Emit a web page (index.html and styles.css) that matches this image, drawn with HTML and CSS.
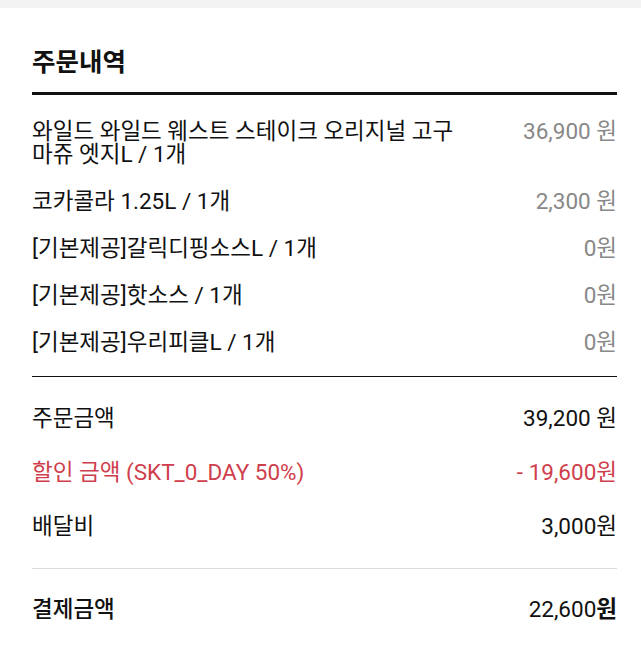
FILE: index.html
```html
<!DOCTYPE html>
<html lang="ko">
<head>
<meta charset="utf-8">
<link rel="stylesheet" href="styles.css">
</head>
<body>
<div class="topband"></div>
<section class="order">
  <h2 class="title">주문내역</h2>
  <ul class="items">
    <li class="row"><span class="name">와일드 와일드 웨스트 스테이크 오리지널 고구마쥬 엣지L / 1개</span><span class="price">36,900 원</span></li>
    <li class="row"><span class="name">코카콜라 1.25L / 1개</span><span class="price">2,300 원</span></li>
    <li class="row"><span class="name">[기본제공]갈릭디핑소스L / 1개</span><span class="price">0원</span></li>
    <li class="row"><span class="name">[기본제공]핫소스 / 1개</span><span class="price">0원</span></li>
    <li class="row"><span class="name">[기본제공]우리피클L / 1개</span><span class="price">0원</span></li>
  </ul>
  <div class="summary">
    <div class="srow"><span>주문금액</span><span>39,200 원</span></div>
    <div class="srow discount"><span>할인 금액 (SKT_0_DAY 50%)</span><span>- 19,600원</span></div>
    <div class="srow"><span>배달비</span><span>3,000원</span></div>
  </div>
  <div class="total">
    <span class="tlabel">결제금액</span>
    <span class="tvalue">22,600<b>원</b></span>
  </div>
</section>
</body>
</html>
```

FILE: styles.css
```css
* { box-sizing: border-box; }
html, body { margin: 0; padding: 0; background: #fff; }
body {
  font-family: Roboto, "Noto Sans CJK KR", sans-serif;
  color: #111;
  font-size: 22.5px;
  line-height: 23px;
}
.topband { height: 8px; background: #f3f3f3; }
.order { padding: 0 24px 0 32px; }
.title {
  margin: 0;
  padding-top: 38px;
  padding-bottom: 14px;
  font-size: 25.5px;
  line-height: 32px;
  font-weight: 700;
  color: #111;
  border-bottom: 3px solid #111;
}
.items {
  list-style: none;
  margin: 0;
  padding: 25px 0 22px;
  display: flex;
  flex-direction: column;
  gap: 24px;
  border-bottom: 1px solid #111;
}
.row {
  display: flex;
  justify-content: space-between;
  align-items: flex-start;
}
.name { width: 440px; color: #111; }
.price { color: #888; white-space: nowrap; }
.summary {
  padding: 30px 0 30px;
  display: flex;
  flex-direction: column;
  gap: 31px;
  border-bottom: 1px solid #ddd;
}
.srow { display: flex; justify-content: space-between; }
.discount { color: #cf3e4c; }
.total {
  display: flex;
  justify-content: space-between;
  padding-top: 29px;
}
.tlabel { font-weight: 500; }
.tvalue b { font-weight: 700; }
```
